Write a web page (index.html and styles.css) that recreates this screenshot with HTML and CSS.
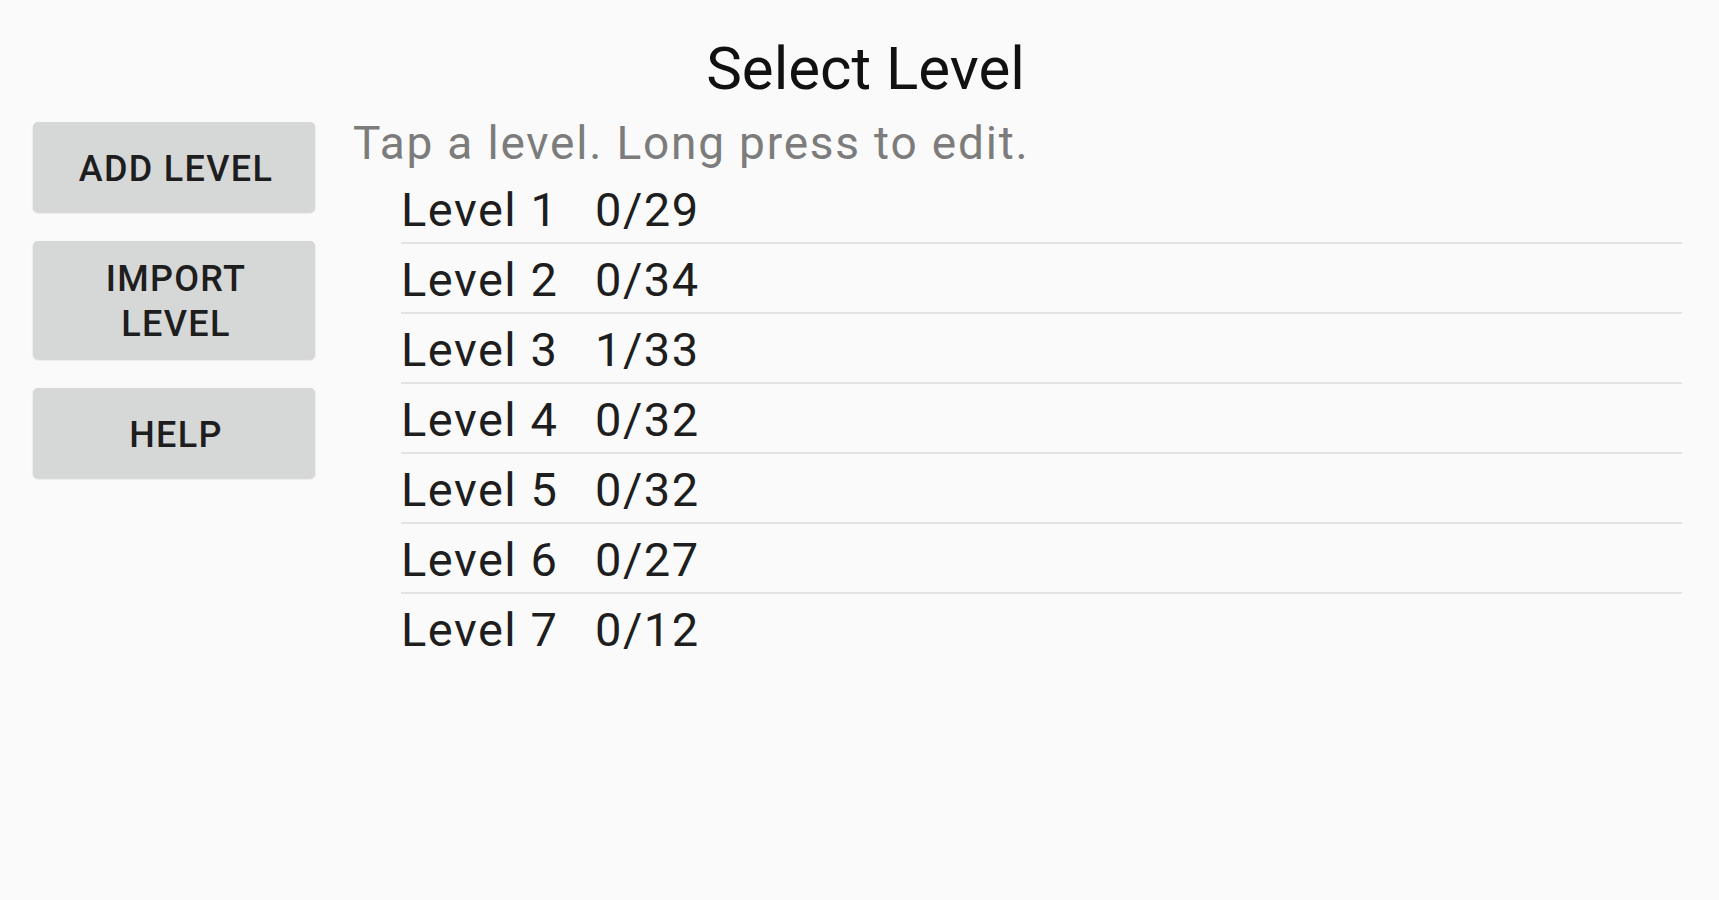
FILE: index.html
```html
<!DOCTYPE html>
<html lang="en">
<head>
<meta charset="utf-8">
<title>Select Level</title>
<link rel="stylesheet" href="styles.css">
</head>
<body>
<h1 class="title">Select Level</h1>
<div class="content">
  <div class="sidebar">
    <button class="btn">Add Level</button>
    <button class="btn">Import<br>Level</button>
    <button class="btn">Help</button>
  </div>
  <div class="main">
    <p class="hint">Tap a level. Long press to edit.</p>
    <ul class="levels">
      <li class="level"><span class="name">Level 1</span><span class="score">0/29</span></li>
      <li class="level"><span class="name">Level 2</span><span class="score">0/34</span></li>
      <li class="level"><span class="name">Level 3</span><span class="score">1/33</span></li>
      <li class="level"><span class="name">Level 4</span><span class="score">0/32</span></li>
      <li class="level"><span class="name">Level 5</span><span class="score">0/32</span></li>
      <li class="level"><span class="name">Level 6</span><span class="score">0/27</span></li>
      <li class="level"><span class="name">Level 7</span><span class="score">0/12</span></li>
    </ul>
  </div>
</div>
</body>
</html>
```

FILE: styles.css
```css
html, body {
  margin: 0;
  padding: 0;
  background: #fafafa;
}
body {
  font-family: Roboto, "Liberation Sans", sans-serif;
  color: #1c1c1c;
  width: 1719px;
  height: 900px;
  overflow: hidden;
}
.title {
  margin: 0;
  padding: 34px 0 0 12px;
  font-size: 60px;
  line-height: 70px;
  font-weight: 400;
  text-align: center;
  color: #111;
}
.content {
  display: flex;
  margin-top: 8px;
}
.sidebar {
  display: flex;
  flex-direction: column;
  gap: 29px;
  width: 282px;
  margin-left: 33px;
  padding-top: 10px;
  flex: none;
}
.btn {
  display: flex;
  align-items: center;
  justify-content: center;
  min-height: 90px;
  padding: 16px 6px 12px 10px;
  border: none;
  border-radius: 5px;
  background: #d6d7d7;
  box-shadow: 0 1px 2px rgba(0, 0, 0, 0.18);
  font-family: Roboto, "Liberation Sans", sans-serif;
  font-weight: 500;
  font-size: 36px;
  line-height: 45px;
  letter-spacing: 1.3px;
  text-transform: uppercase;
  color: #1e1e1e;
  text-align: center;
}
.main {
  flex: 1;
  margin-left: 38px;
  margin-right: 37px;
}
.hint {
  margin: 0;
  padding-top: 1px;
  font-size: 46px;
  line-height: 60px;
  letter-spacing: 1.8px;
  color: #7c7c7c;
}
.levels {
  list-style: none;
  margin: 1px 0 0 48px;
  padding: 0;
}
.level {
  display: grid;
  grid-template-columns: 194px 1fr;
  padding-top: 4px;
  font-size: 47px;
  line-height: 64px;
  letter-spacing: 1.5px;
  color: #1e1e1e;
  border-bottom: 2px solid #e3e3e3;
}
.level:last-child {
  border-bottom: none;
}
```
